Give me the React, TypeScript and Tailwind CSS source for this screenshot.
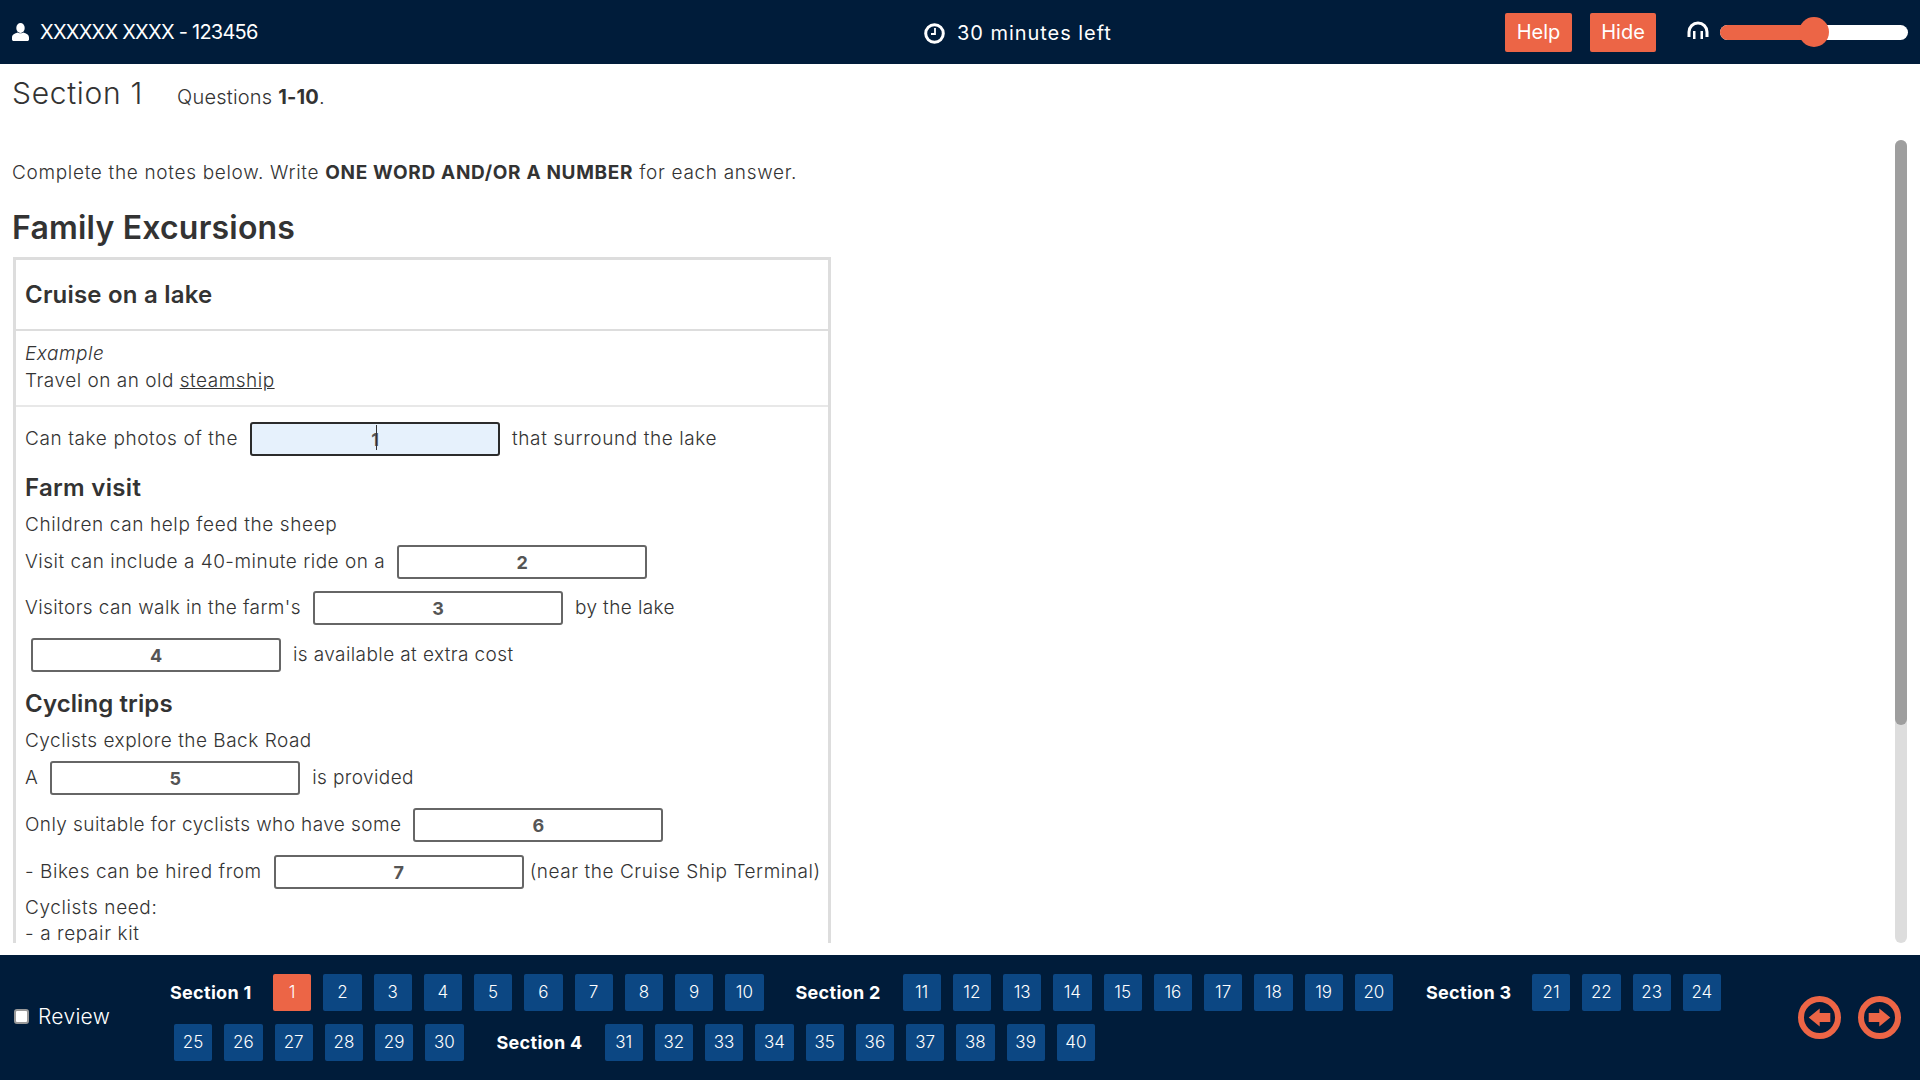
import React from 'react'

const font = "font-['Inter','Liberation_Sans',sans-serif]"

const Blank = ({ n, active, cls = "mx-[12px]" }: { n: number; active?: boolean; cls?: string }) => (
  <span className={`inline-flex shrink-0 w-[250px] h-[34px] items-center justify-center rounded-[3px] border-2 font-bold text-[18px] tracking-normal ${cls} ${active ? "bg-[#e6f1fc] border-[#2b2b2b]" : "bg-white border-[#666]"} text-[#555]`}>
    {active ? (
      <span className="relative">
        1
        <span className="absolute left-[5px] top-[-1px] w-px h-[25px] bg-[#333]" />
      </span>
    ) : n}
  </span>
)

const NavBtn = ({ n }: { n: number }) => (
  <button className={`w-[38.25px] h-[37px] mx-[6px] rounded-[2px] text-[17px] font-[350] text-white flex items-center justify-center ${n === 1 ? "bg-[#ec6546]" : "bg-[#0c4783]"}`}>{n}</button>
)

const Label = ({ text, cls }: { text: string; cls: string }) => (
  <span className={`font-bold text-[18px] tracking-[0.3px] text-white whitespace-nowrap ${cls}`}>{text}</span>
)

const UserIcon = () => (
  <svg width="17" height="18" viewBox="0 0 17 18" className="shrink-0" fill="white">
    <ellipse cx="8.5" cy="5" rx="4.2" ry="5" />
    <path d="M5.4 9.6 C3 10.6 0 11.6 0 14.5 V16.5 C0 17.4 0.8 18 1.6 18 H15.4 C16.2 18 17 17.4 17 16.5 V14.5 C17 11.6 14 10.6 11.6 9.6 C10.6 10.6 6.4 10.6 5.4 9.6 Z" />
  </svg>
)

const ClockIcon = () => (
  <svg width="21" height="21" viewBox="0 0 21 21" className="shrink-0" fill="none" stroke="white">
    <circle cx="10.5" cy="10.5" r="8.8" strokeWidth="3" />
    <path d="M11 5 V11 H7" strokeWidth="1.8" />
  </svg>
)

const PhonesIcon = () => (
  <svg width="22" height="18" viewBox="0 0 22 18" className="shrink-0" fill="none" stroke="white">
    <path d="M2 16 V11 A9 9 0 0 1 20 11 V16" strokeWidth="3" />
    <rect x="6" y="10" width="2.5" height="8" fill="white" stroke="none" />
    <rect x="13.5" y="10" width="2.5" height="8" fill="white" stroke="none" />
  </svg>
)

const ArrowIcon = ({ points }: { points: string }) => (
  <svg width="43" height="43" viewBox="0 0 43 43" fill="none">
    <circle cx="21.5" cy="21.5" r="18.5" stroke="#ec6546" strokeWidth="6" />
    <polygon points={points} fill="#ec6546" />
  </svg>
)

const range = (a: number, b: number) => Array.from({ length: b - a + 1 }, (_, i) => a + i)

export default function App() {
  return (
    <div className={`h-screen w-full flex flex-col overflow-hidden bg-white text-[#333] ${font}`}>
      {/* top bar */}
      <div className="h-16 shrink-0 bg-[#001c3a] text-white flex items-center text-[20px]">
        <div className="w-[907px] pl-[12px] flex items-center gap-[11px]">
          <UserIcon />
          <span className="tracking-[-0.75px]">XXXXXX XXXX - 123456</span>
        </div>
        <div className="w-[577px] flex items-center gap-[12px] pl-[17px] pt-[2px]">
          <ClockIcon />
          <span className="tracking-[0.95px]">30 minutes left</span>
        </div>
        <button className="w-[67px] h-[39px] bg-[#ec6546] rounded-[2px] ml-[21px] text-[20px]">Help</button>
        <button className="w-[66px] h-[39px] bg-[#ec6546] rounded-[2px] ml-[18px] text-[20px]">Hide</button>
        <div className="ml-[31px] mb-[4px]"><PhonesIcon /></div>
        <div className="ml-[11px] w-[188px] h-[15px] rounded-full bg-white relative">
          <div className="w-[94px] h-full rounded-full bg-[#ec6546]" />
          <div className="absolute left-[79px] top-[-8px] w-[30px] h-[30px] rounded-full bg-[#ec6546]" />
        </div>
      </div>

      {/* content */}
      <div className="flex-1 min-h-0 flex">
        <div className="w-[1895px] h-[879px] overflow-hidden pl-[12px]">
          <div className="flex items-baseline h-[52px] pt-[4px]">
            <span className="text-[30px] font-light leading-[50px] tracking-[0.7px]">Section 1</span>
            <span className="ml-[34px] text-[20px] font-[350] tracking-[0.2px]">Questions <b>1-10</b>.</span>
          </div>
          <p className="mt-[43px] text-[19px] leading-[28px] font-[350] tracking-[0.68px]">Complete the notes below. Write <b className="font-bold">ONE WORD AND/OR A NUMBER</b> for each answer.</p>
          <h2 className="mt-[21px] text-[32px] leading-[40px] font-semibold tracking-[0.2px]">Family Excursions</h2>
          <div className="mt-[9px] w-[818px] ml-[1px] border-[3px] border-[#ddd] text-[19px] font-[350] whitespace-nowrap tracking-[0.6px] pb-[40px]">
            <div className="h-[71px] flex items-center px-[9px] text-[24px] font-semibold tracking-[0.2px] border-b-2 border-[#ddd]">Cruise on a lake</div>
            <div className="h-[76px] px-[9px] pt-[9px] border-b-2 border-[#e8e8e8] leading-[27px] tracking-[0.5px]">
              <div className="italic">Example</div>
              <div>Travel on an old <u>steamship</u></div>
            </div>
            <div className="px-[9px]">
              <div className="h-[34px] mt-[15px] flex items-center">Can take photos of the<Blank n={1} active />that surround the lake</div>
              <h3 className="mt-[17px] text-[24px] font-semibold tracking-[0.3px] leading-[30px]">Farm visit</h3>
              <div className="mt-[7px] leading-[30px]">Children can help feed the sheep</div>
              <div className="h-[34px] mt-[5px] flex items-center tracking-[0.5px]">Visit can include a 40-minute ride on a<Blank n={2} /></div>
              <div className="h-[34px] mt-[12px] flex items-center tracking-[0.4px]">Visitors can walk in the farm's<Blank n={3} />by the lake</div>
              <div className="h-[34px] mt-[13px] flex items-center tracking-[0.4px]"><Blank n={4} cls="ml-[6px] mr-[12px]" />is available at extra cost</div>
              <h3 className="mt-[17px] text-[24px] font-semibold tracking-[0.1px] leading-[30px]">Cycling trips</h3>
              <div className="mt-[7px] leading-[30px] tracking-[0.5px]">Cyclists explore the Back Road</div>
              <div className="h-[34px] mt-[5px] flex items-center tracking-[0.4px]">A<Blank n={5} />is provided</div>
              <div className="h-[34px] mt-[13px] flex items-center tracking-[0.42px]">Only suitable for cyclists who have some<Blank n={6} /></div>
              <div className="h-[34px] mt-[13px] flex items-center tracking-[0.55px]">- Bikes can be hired from<Blank n={7} cls="ml-[12px] mr-[6px]" /><span>(near the Cruise Ship Terminal)</span></div>
              <div className="mt-[6px] leading-[26px]">Cyclists need:</div>
              <div className="leading-[26px]">- a repair kit</div>
            </div>
          </div>
        </div>
        {/* scrollbar */}
        <div className="pt-[76px]">
          <div className="w-[12px] h-[803px] rounded-full bg-[#ddd]">
            <div className="w-[12px] h-[585px] rounded-full bg-[#9e9e9e]" />
          </div>
        </div>
      </div>

      {/* bottom nav */}
      <div className="h-[125px] shrink-0 bg-[#001c3a] text-white flex relative">
        <label className="w-[168px] flex items-center pl-[14px] pb-[2px] text-[21px] font-[350] tracking-[0.3px] gap-[9px]">
          <input type="checkbox" className="appearance-none w-[15px] h-[15px] bg-white border-2 border-[#999] rounded-[3px]" />
          Review
        </label>
        <div className="pt-[19px] flex flex-col gap-[13px]">
          <div className="flex items-center">
            <Label text="Section 1" cls="w-[99px] pl-[2px]" />
            {range(1, 10).map(n => <NavBtn key={n} n={n} />)}
            <Label text="Section 2" cls="ml-[26px] w-[101px]" />
            {range(11, 20).map(n => <NavBtn key={n} n={n} />)}
            <Label text="Section 3" cls="ml-[27px] w-[100px]" />
            {range(21, 24).map(n => <NavBtn key={n} n={n} />)}
          </div>
          <div className="flex items-center">
            {range(25, 30).map(n => <NavBtn key={n} n={n} />)}
            <Label text="Section 4" cls="ml-[27px] w-[102px]" />
            {range(31, 40).map(n => <NavBtn key={n} n={n} />)}
          </div>
        </div>
        <div className="absolute right-[19px] top-[41px] flex gap-[17px]">
          <ArrowIcon points="10.7,21.5 21.7,12.5 21.7,17 32.3,17 32.3,26 21.7,26 21.7,30.5" />
          <ArrowIcon points="32.3,21.5 21.3,12.5 21.3,17 10.7,17 10.7,26 21.3,26 21.3,30.5" />
        </div>
      </div>
    </div>
  )
}
